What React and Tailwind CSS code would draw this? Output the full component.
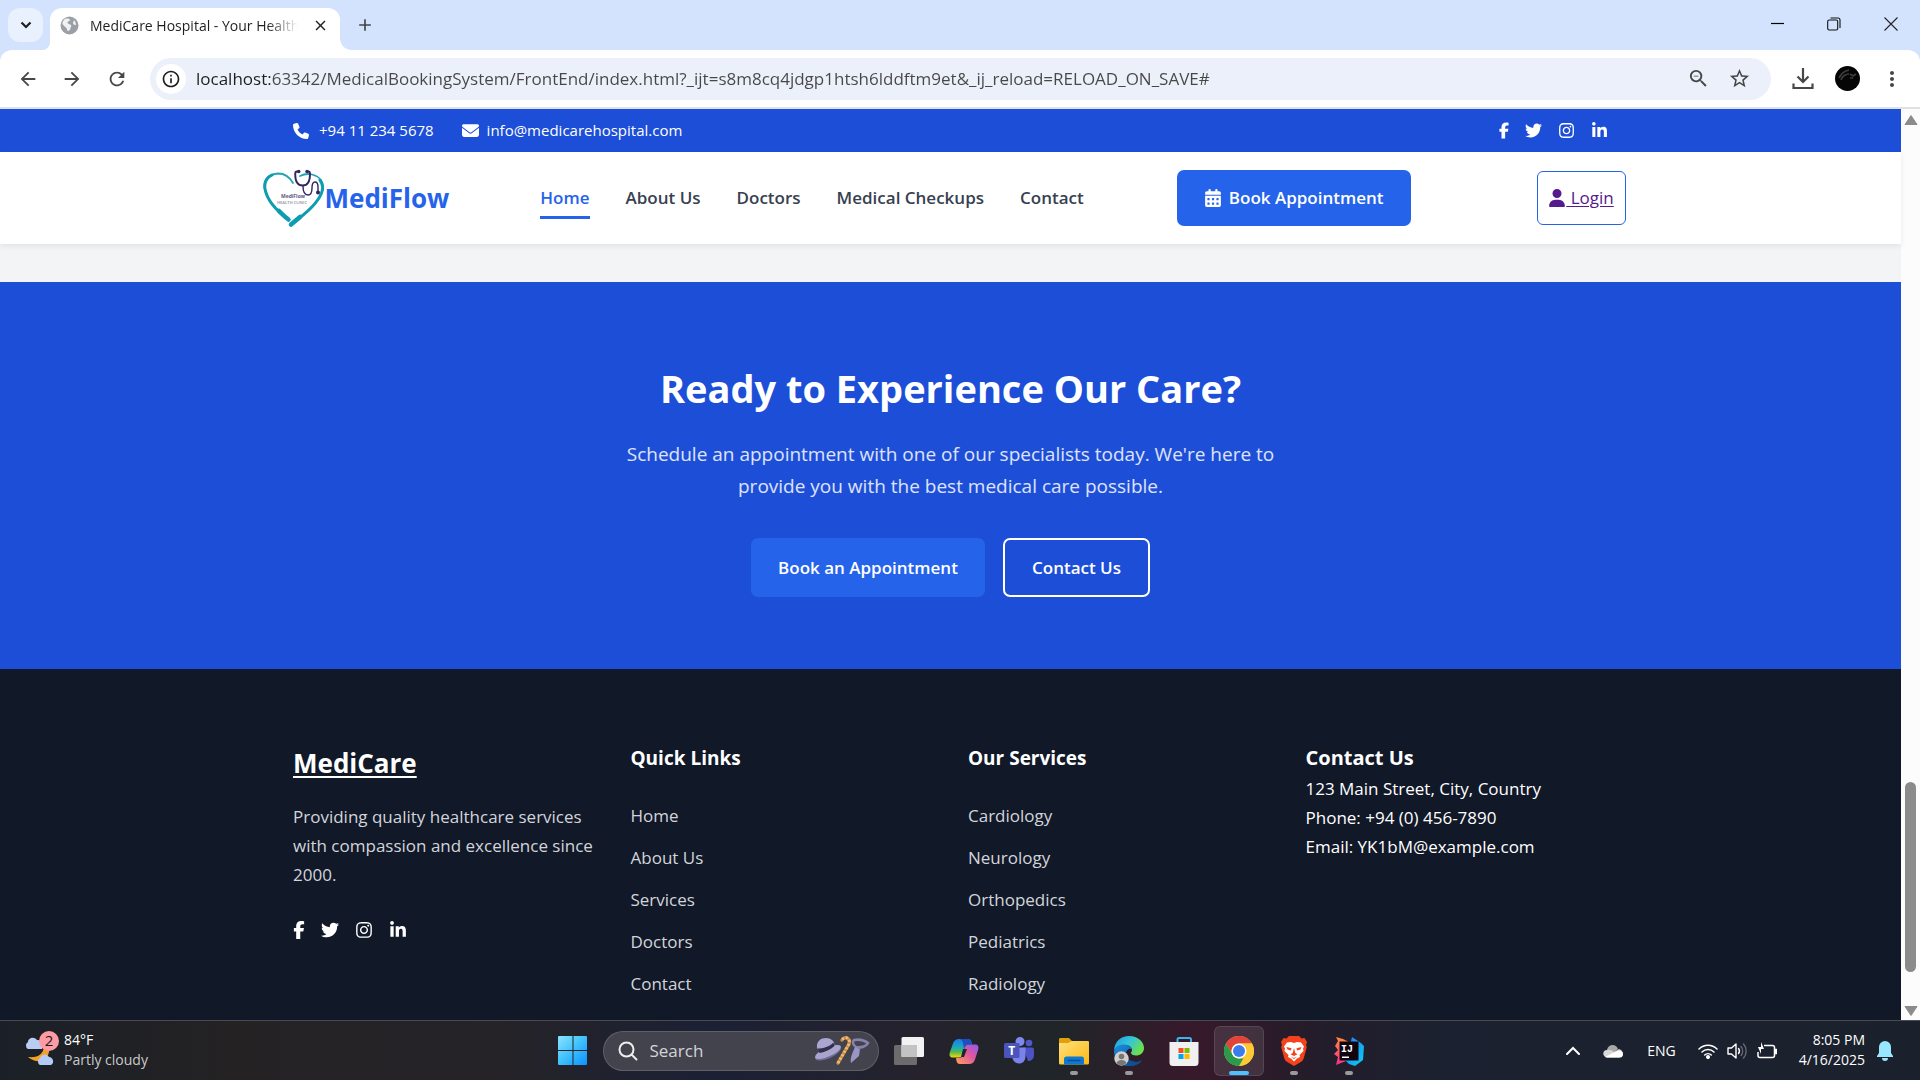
import React from "react";
import {
  FaPhone,
  FaEnvelope,
  FaFacebookF,
  FaTwitter,
  FaInstagram,
  FaLinkedinIn,
  FaCalendarDays,
  FaUser,
} from "react-icons/fa6";
import {
  MdArrowBack,
  MdArrowForward,
  MdRefresh,
  MdOutlineInfo,
  MdMoreVert,
  MdZoomOut,
  MdStarOutline,
  MdClose,
  MdAdd,
} from "react-icons/md";

const navLinks = ["Home", "About Us", "Doctors", "Medical Checkups", "Contact"];
const quickLinks = ["Home", "About Us", "Services", "Doctors", "Contact"];
const services = ["Cardiology", "Neurology", "Orthopedics", "Pediatrics", "Radiology"];

function TabStrip() {
  return (
    <div className="flex h-[50px] items-end bg-[#d3e3fd] pl-2">
      <button aria-label="Search tabs" className="mb-2 flex h-[34px] w-[35px] items-center justify-center rounded-xl bg-[#e9f1fe]">
        <svg width="12" height="8" viewBox="0 0 12 8" fill="none" stroke="#1f1f1f" strokeWidth="2.2"><path d="M1.5 1.5 6 6l4.500-4.500" /></svg>
      </button>
      <div className="flex items-end">
        <svg width="7" height="12" viewBox="0 0 7 12"><path d="M7 4v8H0c4 0 7-4 7-8Z" fill="#fff" /></svg>
        <div className="flex h-[42px] w-[290px] items-center rounded-t-xl bg-white px-2.5 pb-2">
          <svg width="19" height="19" viewBox="0 0 19 19"><circle cx="9.500" cy="9.500" r="9" fill="#9aa0a6" /><path d="M6 2.500c2 0 4 0 4 1.500S7.500 5 7.500 6.500 10 8 11 9s-.5 1.500-.5 3-1.500 3-2.500 3-.8-2-1.500-3S3 9.500 2.500 8 4 3 6 2.500Zm8 1.500c1 1 2 3 2 5-1.500 0-3-.5-3-2s1-1.500 1-3Z" fill="#fff" opacity=".85" /></svg>
          <span className="ml-[11px] w-[208px] overflow-hidden whitespace-nowrap text-[14px] text-[#1f1f1f] [mask-image:linear-gradient(to_right,black_85%,transparent)]">
            MediCare Hospital - Your Health
          </span>
          <button aria-label="Close tab" className="ml-auto flex size-5 items-center justify-center text-[17px] text-[#1f1f1f]"><MdClose /></button>
        </div>
        <svg width="12" height="12" viewBox="0 0 12 12"><path d="M0 0v12h12C5 12 0 7 0 0Z" fill="#fff" /></svg>
      </div>
      <button aria-label="New tab" className="mb-3 flex size-[26px] items-center justify-center text-[20px] text-[#444746]"><MdAdd /></button>
      <div className="mb-3 ml-auto flex items-center text-[#1f1f1f]">
        <button aria-label="Minimize" className="flex h-7 w-14 items-center justify-center">
          <svg width="14" height="14" viewBox="0 0 14 14"><path d="M0 6.500h13" stroke="#000" strokeWidth="1.200" /></svg>
        </button>
        <button aria-label="Restore" className="flex h-7 w-14 items-center justify-center">
          <svg width="14" height="14" viewBox="0 0 14 14" fill="none" stroke="#111" strokeWidth="1.100"><rect x=".7" y="3" width="10" height="10" rx="1.500" /><path d="M3.500 1h7.500a2 2 0 0 1 2 2v8" /></svg>
        </button>
        <button aria-label="Close window" className="flex h-7 w-[58px] items-center justify-center">
          <svg width="14" height="14" viewBox="0 0 14 14"><path d="m.5.5 13 13m0-13-13 13" stroke="#222" strokeWidth="1.100" /></svg>
        </button>
      </div>
    </div>
  );
}

function Toolbar() {
  return (
    <div className="bg-[#d3e3fd]">
      <div className="flex h-[59px] items-center rounded-t-xl border-b-2 border-[#dfe1e5] bg-white px-4 text-[#474747]">
        <button aria-label="Back" className="flex w-6 justify-center text-[22px]"><MdArrowBack /></button>
        <button aria-label="Forward" className="ml-5 flex w-6 justify-center text-[22px]"><MdArrowForward /></button>
        <button aria-label="Reload" className="ml-[21px] flex w-6 justify-center text-[22px]"><MdRefresh /></button>
        <div className="ml-[21px] flex h-[42px] flex-1 items-center rounded-full bg-[#ebf0fa] pl-1.5 pr-5">
          <button aria-label="Site information" className="flex size-[30px] items-center justify-center rounded-full bg-white text-[20px] text-[#1f1f1f]"><MdOutlineInfo /></button>
          <input
            aria-label="Address"
            className="ml-[10px] block h-[30px] min-w-0 flex-1 bg-[linear-gradient(90deg,#1f1f1f_74px,#474747_74px)] bg-clip-text text-[17px] text-transparent outline-none"
            defaultValue="localhost:63342/MedicalBookingSystem/FrontEnd/index.html?_ijt=s8m8cq4jdgp1htsh6lddftm9et&_ij_reload=RELOAD_ON_SAVE#"
          />
          <button aria-label="Zoom" className="flex text-[23px]"><MdZoomOut /></button>
          <button aria-label="Bookmark" className="ml-[18px] flex text-[23px]"><MdStarOutline /></button>
        </div>
        <button aria-label="Downloads" className="ml-5 flex w-6 justify-center">
          <svg width="22" height="22" viewBox="0 0 22 22" fill="none" stroke="#474747" strokeWidth="2.200"><path d="M11 0v14M5.500 8.500 11 14l5.500-5.500M1.500 15.500V20h19v-4.500" /></svg>
        </button>
        <button aria-label="Profile" className="ml-5 flex size-[25px]">
          <svg width="25" height="25" viewBox="0 0 25 25"><circle cx="12.500" cy="12.500" r="12.500" fill="#050505" /><path d="M4 12c2-4 5-7 10-8m-8 10c1-4 5-6 8-6m1 0 3 2 3-2m-6 4 3 0" stroke="#3d3d3d" strokeWidth="1.600" fill="none" /></svg>
        </button>
        <button aria-label="Menu" className="ml-5 flex w-6 justify-center text-[24px]"><MdMoreVert /></button>
      </div>
    </div>
  );
}

const socials = [
  ["Facebook", FaFacebookF],
  ["Twitter", FaTwitter],
  ["Instagram", FaInstagram],
  ["LinkedIn", FaLinkedinIn],
];

function TopBar() {
  return (
    <div className="bg-[#1d4ed8] text-white">
      <div className="mx-auto flex h-[43px] max-w-[1315px] items-center text-[15px]">
        <FaPhone className="text-[16px]" />
        <span className="ml-2.5">+94 11 234 5678</span>
        <FaEnvelope className="ml-7 text-[17px]" />
        <span className="ml-2">info@medicarehospital.com</span>
        <div className="ml-auto flex items-center gap-4 text-[17px]">
          {socials.map(([name, Icon]) => (
            <a key={name} href="#" aria-label={name}><Icon className={name === "Facebook" ? "w-2.5" : ""} /></a>
          ))}
        </div>
      </div>
    </div>
  );
}

function HeartLogo() {
  return (
    <svg width="63" height="62" viewBox="0 0 63 62" fill="none" strokeLinecap="round">
      <path d="M31 16C27 9 22 6.500 16 6.500 6 7 1.500 13 2.500 21" stroke="#1fa3b5" strokeWidth="1.800" />
      <path d="M10 8C4 11 2 16 3 22c2 11 12 22 23 30" stroke="#0d9cb0" strokeWidth="3" />
      <path d="M17 44c3 3 6 6 9.500 8.500" stroke="#0d9cb0" strokeWidth="4.500" />
      <path d="M38 9c4-2 8-2.500 12-1.500 8 2 12 8 10.500 16" stroke="#1fa3b5" strokeWidth="1.800" />
      <path d="M58 13c3 4 3.500 8 1.500 13-4 11-16 21-30 31" stroke="#0d9cb0" strokeWidth="3" />
      <path d="m29 57.500 9-7.500" stroke="#0d9cb0" strokeWidth="4.500" />
      <path d="M36.500 4.500h-1.500c-1.200 0-1.800 1-1.800 2.500 0 7 2.500 11.500 7.500 11.500S48 14 48 7c0-1.500-.6-2.500-1.800-2.500H45" stroke="#32245f" strokeWidth="1.900" />
      <circle cx="36.800" cy="4.500" r="1.700" fill="#32245f" />
      <circle cx="45" cy="4.500" r="1.700" fill="#32245f" />
      <path d="M41 19c0 6 2 9 5 9s4-3 4-7 1-6 3-6 3 2 3 5v5" stroke="#32245f" strokeWidth="1.400" />
      <circle cx="56" cy="25.500" r="2" fill="#32245f" />
      <text x="19" y="31" fontSize="5" fill="#5d5880" fontFamily="Open Sans, sans-serif">MediFlow</text>
      <text x="15" y="37" fontSize="4" fill="#a3a3ad" fontFamily="Open Sans, sans-serif">HEALTH CLINIC</text>
    </svg>
  );
}

function Header() {
  return (
    <header className="relative z-10 bg-white shadow-[0_2px_6px_rgba(0,0,0,0.08)]">
      <div className="mx-auto flex h-[92px] max-w-[1378px] items-center">
        <a href="#" className="flex items-center text-[26px] font-bold text-[#2563eb]">
          <HeartLogo />
          <span className="whitespace-nowrap">MediFlow</span>
        </a>
        <nav className="ml-[91px] flex gap-9 text-[17px] font-semibold text-[#374151]">
          {navLinks.map((label, i) => (
            <a
              key={label}
              href="#"
              className={i === 0 ? "whitespace-nowrap border-b-3 border-[#2563eb] pb-1.5 pt-2 text-[#2563eb]" : "whitespace-nowrap border-b-3 border-transparent pb-1.5 pt-2"}
            >
              {label}
            </a>
          ))}
        </nav>
        <button className="ml-[93px] flex h-14 w-[234px] items-center justify-center gap-[7px] rounded-[7px] bg-[#2563eb] text-[17px] font-semibold text-white">
          <FaCalendarDays className="text-[18px]" />
          Book Appointment
        </button>
        <a href="#" className="ml-auto mr-[14px] flex h-[54px] w-[89px] items-center justify-center rounded-md border border-[#2563eb] text-[17px] text-[#551a8b]">
          <FaUser className="text-[18px]" />
          <span className="whitespace-pre underline underline-offset-2"> Login</span>
        </a>
      </div>
    </header>
  );
}

function CallToAction() {
  return (
    <section className="flex h-[387px] flex-col items-center bg-[#1d4ed8] pt-[79px] text-center text-white">
      <h2 className="text-[38px] font-bold leading-[54px]">Ready to Experience Our Care?</h2>
      <p className="mt-[23px] max-w-[680px] text-[19px] leading-8 text-white/85">
        Schedule an appointment with one of our specialists today. We're here to provide you with the best medical care possible.
      </p>
      <div className="mt-9 flex gap-[18px] text-[17px] font-semibold">
        <button className="h-[59px] w-[234px] rounded-[7px] bg-[#2563eb]">Book an Appointment</button>
        <button className="h-[59px] w-[147px] rounded-[7px] border-2 border-white">Contact Us</button>
      </div>
    </section>
  );
}

function LinkColumn({ title, links }) {
  return (
    <div>
      <h3 className="text-[19px] font-bold leading-8">{title}</h3>
      <ul className="mt-7 flex flex-col gap-[14px] leading-7 text-[#d1d5db]">
        {links.map((link) => (
          <li key={link}><a href="#">{link}</a></li>
        ))}
      </ul>
    </div>
  );
}

function Footer() {
  return (
    <footer className="min-h-0 flex-1 overflow-hidden bg-[#111827] pt-[73px] text-white">
      <div className="mx-auto grid max-w-[1315px] grid-cols-4 gap-[35px] text-[17px] leading-[29px]">
        <div>
          <a href="#" className="block text-[26px] font-bold leading-[42px] underline decoration-2 underline-offset-3">MediCare</a>
          <p className="mt-[18px] text-[#d1d5db]">Providing quality healthcare services with compassion and excellence since 2000.</p>
          <div className="mt-8 flex items-center gap-4 text-[18px]">
            {socials.map(([name, Icon]) => (
              <a key={name} href="#" aria-label={name}><Icon className={name === "Facebook" ? "w-3" : ""} /></a>
            ))}
          </div>
        </div>
        <LinkColumn title="Quick Links" links={quickLinks} />
        <LinkColumn title="Our Services" links={services} />
        <div>
          <h3 className="text-[20px] font-bold leading-8">Contact Us</h3>
          <p>123 Main Street, City, Country</p>
          <p>Phone: +94 (0) 456-7890</p>
          <p>Email: YK1bM@example.com</p>
        </div>
      </div>
    </footer>
  );
}

function Scrollbar() {
  return (
    <div className="flex w-[19px] flex-col items-center bg-[#fcfcfc]">
      <svg className="mt-1.5" width="14" height="10" viewBox="0 0 14 10"><path d="M7 .5 13 9.500H1Z" fill="#8b8b8b" stroke="#8b8b8b" strokeLinejoin="round" /></svg>
      <div className="flex-[656]" />
      <div className="w-[11px] flex-[190] rounded-full bg-[#8b8b8b]" />
      <div className="flex-[34]" />
      <svg className="mb-1" width="14" height="10" viewBox="0 0 14 10"><path d="M1 .5h12L7 9.500Z" fill="#8b8b8b" stroke="#8b8b8b" strokeLinejoin="round" /></svg>
    </div>
  );
}

function WindowsIcon() {
  return (
    <svg width="30" height="30" viewBox="0 0 30 30">
      <defs><linearGradient id="win" x1="0" y1="0" x2="1" y2="1"><stop offset="0" stopColor="#8ae4ff" /><stop offset=".5" stopColor="#3fc0fb" /><stop offset="1" stopColor="#0a93ff" /></linearGradient></defs>
      <path d="M1 0h13.500v14H0V1a1 1 0 0 1 1-1Zm14.500 0H28a1 1 0 0 1 1 1v13H15.500ZM0 15h14.500v14H1a1 1 0 0 1-1-1Zm15.500 0H29v13a1 1 0 0 1-1 1H15.500Z" fill="url(#win)" />
    </svg>
  );
}

function SearchDoodle() {
  return (
    <svg width="56" height="32" viewBox="0 0 56 32" fill="none">
      <ellipse cx="14" cy="18" rx="14" ry="5.500" transform="rotate(-24 14 18)" fill="#6f6b98" />
      <ellipse cx="14" cy="17" rx="14" ry="4.500" transform="rotate(-24 14 17)" fill="#a7a4cd" />
      <path d="M3 13C2 6 7 3 12 3c5 0 8 3 8.500 6.500-4 4-10 6.500-15 7.500Z" fill="#a9a7d0" />
      <path d="M3.500 13.500c6 0 12-2 16-6l1 3.500C16 15 10 17.500 5.500 18Z" fill="#32304e" />
      <path d="M24 28 35 9c2-5-4-9-7-4" stroke="#c98d45" strokeWidth="3.400" strokeLinecap="round" />
      <path d="M24 28 35 9c2-5-4-9-7-4" stroke="#f0bd7b" strokeWidth="2.800" strokeDasharray="2 2" />
      <path d="M40 5c5-1 10 0 14 3-2 4-8 5-12 4-3-2-4-5-2-7Z" stroke="#8582ad" strokeWidth="2.600" />
      <path d="m41 12 5 2-1 7-8 7c-1-5 1-9 4-16Z" fill="#9996c4" />
    </svg>
  );
}

function TaskViewIcon() {
  return (
    <svg width="30" height="28" viewBox="0 0 30 28">
      <rect x="0" y="8" width="23" height="20" rx="1.500" fill="#6d6b6b" />
      <rect x="7.500" y="0" width="22.500" height="20" rx="1.500" fill="#f2f2f2" />
      <path d="M7.500 8H23v12H7.500Z" fill="#c4c3c4" />
    </svg>
  );
}

function CopilotIcon() {
  return (
    <svg width="30" height="28" viewBox="0 0 30 28">
      <defs>
        <linearGradient id="cpa" x1="0" y1="0" x2="0" y2="1"><stop offset="0" stopColor="#1f7be8" /><stop offset=".45" stopColor="#1ba9bd" /><stop offset=".7" stopColor="#55b84e" /><stop offset="1" stopColor="#f5d90a" /></linearGradient>
        <linearGradient id="cpb" x1="1" y1="0" x2="0" y2="1"><stop offset="0" stopColor="#8a5cf0" /><stop offset=".45" stopColor="#e0569e" /><stop offset="1" stopColor="#ffa357" /></linearGradient>
      </defs>
      <path d="M10 2h9c2 0 3 1 3.500 3l.7 2.500h-4c-2 0-3 1-3.500 3l-2 7c-.7 2-2 3-4 3H4c-3 0-4-2-3.200-5L4 6.500C5 3.500 7 2 10 2Z" fill="url(#cpa)" />
      <path d="M20 27h-9c-2 0-3-1-3.500-3L7 21h3c2 0 3-1 3.500-3l2.300-7.500c.7-2 2-3 4-3H26c3 0 4 2 3.200 5L26 22.500C25 25.500 23 27 20 27Z" fill="url(#cpb)" />
      <path d="m14 12-2 8h3l3-8Z" fill="#202432" />
      <path d="M19 2c2 0 3 1 3.500 3l.7 2.500h-4c-2 0-3.200 1-3.700 3l-.5 1.500L14 6c-.5-2-1.500-3.500-3.500-4Z" fill="#1b50c5" />
    </svg>
  );
}

function TeamsIcon() {
  return (
    <svg width="30" height="28" viewBox="0 0 30 28">
      <circle cx="25" cy="6" r="3.300" fill="#5059c9" /><path d="M19 10.500h9a2 2 0 0 1 2 2V18c0 4-3 6-6 6Z" fill="#4a52c4" />
      <circle cx="16" cy="4.500" r="4.500" fill="#7f89ec" /><path d="M8 10.500h13.500V19c0 5-3 7.500-6.500 7.500S9 24 8 20Z" fill="#7b83eb" />
      <rect x="0" y="6" width="15.500" height="15" rx="1.500" fill="#4b53bc" />
      <text x="7.700" y="18" textAnchor="middle" fontSize="12" fontWeight="700" fill="#fff" fontFamily="Open Sans, sans-serif">T</text>
    </svg>
  );
}

function ExplorerIcon() {
  return (
    <svg width="30" height="28" viewBox="0 0 30 28">
      <defs><linearGradient id="fold" x1="0" y1="0" x2="1" y2="1"><stop offset="0" stopColor="#ffe07a" /><stop offset="1" stopColor="#fbb917" /></linearGradient></defs>
      <path d="M0 2.500C0 1.500.7 1 1.500 1h8.500l3 3h15a2 2 0 0 1 2 2v6H0Z" fill="#e2a10a" />
      <path d="M0 6h9l4-2h15.500c1 0 1.500.7 1.500 1.500V26a1.500 1.500 0 0 1-1.500 1.500h-27A1.500 1.500 0 0 1 0 26Z" fill="url(#fold)" />
      <path d="M5 27.500V22a2.500 2.500 0 0 1 2.500-2.500h15A2.500 2.500 0 0 1 25 22v5.500Z" fill="#0f78d0" />
      <path d="M9 23.500h12" stroke="#0a4f96" strokeWidth="1.300" strokeLinecap="round" />
    </svg>
  );
}

function EdgeIcon() {
  return (
    <svg width="30" height="30" viewBox="0 0 30 30">
      <defs>
        <linearGradient id="edg" x1="0" y1="0" x2="1" y2=".5"><stop offset="0" stopColor="#1b9de2" /><stop offset=".55" stopColor="#35c6d8" /><stop offset="1" stopColor="#6be04c" /></linearGradient>
        <linearGradient id="edb" x1="0" y1="0" x2="1" y2="1"><stop offset="0" stopColor="#1a8fdc" /><stop offset="1" stopColor="#0c4f9e" /></linearGradient>
      </defs>
      <path d="M0 14C1 5 7 0 15 0c9 0 15 6 15 12 0 5-4 7.500-8 7.500-3 0-5-1-5-2.500 0-1 1-1.500 1-3 0-3-3-5-7-5-5 0-9 2-11 5Z" fill="url(#edg)" />
      <path d="M0 15c1-4 5-6.500 10-6.500 4 0 8 2.500 8 5.500 0-2-6-2-6 4 0 5 5 8 10 8 2 0 4-.5 5.500-1.300C25 28 20 30 15 30 6 30 0 23 0 15Z" fill="url(#edb)" />
      <path d="M12 18c0 5 5 8 10 8 2 0 4-.5 6-2-2 4-7 6-13 6-5-2-7-9-3-12Z" fill="#0f4f94" />
      <circle cx="7.500" cy="22.500" r="7.200" fill="#d2d0ce" /><circle cx="7.500" cy="20.500" r="2.800" fill="#777" /><path d="M2.500 27c1-4 9-4 10 0-3 3.300-7 3.300-10 0Z" fill="#777" />
    </svg>
  );
}

function StoreIcon() {
  return (
    <svg width="30" height="30" viewBox="0 0 30 30">
      <path d="M8.500 7V3.500A1.500 1.500 0 0 1 10 2h10.500A1.500 1.500 0 0 1 22 3.500V7" fill="none" stroke="#35b6f0" strokeWidth="2" />
      <path d="M.5 6h29v20.500a3.500 3.500 0 0 1-3.500 3.500H4a3.500 3.500 0 0 1-3.500-3.500Z" fill="#f0f0f0" />
      <path d="M9.500 12h5v5h-5Z" fill="#f25022" /><path d="M15.500 12h5v5h-5Z" fill="#7fba00" />
      <path d="M9.500 18h5v5h-5Z" fill="#00a4ef" /><path d="M15.500 18h5v5h-5Z" fill="#ffb900" />
    </svg>
  );
}

function ChromeIcon() {
  return (
    <svg width="30" height="30" viewBox="0 0 30 30">
      <circle cx="15" cy="15" r="15" fill="#fcc934" />
      <path d="M2 7.500A15 15 0 0 1 28 7.500H15a7.500 7.500 0 0 0-6.500 11.250Z" fill="#e0443a" />
      <path d="M2 7.500 8.500 18.750A7.500 7.500 0 0 0 15 22.500h6.500L15 30A15 15 0 0 1 2 7.500Z" fill="#2a9a4b" />
      <path d="M28 7.500A15 15 0 0 1 15 30l6.500-11.250A7.500 7.500 0 0 0 15 7.500Z" fill="#fcc934" />
      <circle cx="15" cy="15" r="7.500" fill="#fff" /><circle cx="15" cy="15" r="6" fill="#3b7ded" />
    </svg>
  );
}

function BraveIcon() {
  return (
    <svg width="26" height="30" viewBox="0 0 26 30">
      <path d="M8 0h10l2.500 2.500 3-.5L26 6l-1 3 .8 2-3 11c-.4 1.500-1.300 3-2.600 3.800L13 30l-7.200-4.200C4.500 25 3.600 23.500 3.200 22l-3-11L1 9 0 6l2.500-4 3 .5Z" fill="#f4431c" />
      <path d="M6 6.500 10 6l3 1 3-1 4 .5 3 4-1 2 .5 2.500-4 4 .5 2-3 1.500-3 3-3-3L7 21l.5-2-4-4 .5-2.500-1-2Z" fill="#fff" />
      <path d="m5.500 11 5 1.300-.5 2.200-3.500-1Zm15 0-5 1.300.5 2.200 3.500-1ZM13 12l1.300 5 2.200 1.200L13 20l-3.500-1.800 2.200-1.200ZM9.500 20.500 13 22l3.500-1.500L13 23Z" fill="#f4431c" />
    </svg>
  );
}

function IntelliJIcon() {
  return (
    <svg width="30" height="30" viewBox="0 0 30 30">
      <defs>
        <linearGradient id="ija" x1="0" y1="0" x2="0" y2="1"><stop offset="0" stopColor="#ff8a3c" /><stop offset="1" stopColor="#fb2f8c" /></linearGradient>
        <linearGradient id="ijb" x1="0" y1="0" x2="1" y2="1"><stop offset="0" stopColor="#2673f5" /><stop offset="1" stopColor="#0bd0f2" /></linearGradient>
      </defs>
      <path d="m2 1 7 2 8 4v16L2 29l2-8-4-3 4-4-3-4 3-5Z" fill="url(#ija)" />
      <path d="m18 1 9 6 3 3-1 14-8 6-6-2-5-5 7-18Z" fill="url(#ijb)" />
      <rect x="5.500" y="5.500" width="19" height="19" fill="#100610" />
      <text x="7" y="15.500" fontSize="10" fontWeight="700" fill="#fff" fontFamily="Liberation Mono, monospace">IJ</text>
      <path d="M8 20.500h7v1.500H8Z" fill="#fff" />
    </svg>
  );
}

function TaskButton({ label, children, active, open }) {
  return (
    <button
      aria-label={label}
      className={active ? "relative flex size-[50px] items-center justify-center rounded-md border border-white/10 bg-white/10" : "relative flex size-[50px] items-center justify-center"}
    >
      {children}
      {open && <span className="absolute bottom-[1px] h-1 w-2 rounded-full bg-[#9a9a9a]" />}
      {active && <span className="absolute bottom-0 h-1 w-5 rounded-full bg-[#4cc2ff]" />}
    </button>
  );
}

function Taskbar() {
  return (
    <div className="flex h-[60px] items-center border-t border-[#474a50] bg-[linear-gradient(90deg,#1b2028_0%,#242223_12%,#252328_26%,#1b2034_37%,#25222d_48%,#1f2528_55%,#37192b_62%,#251c2a_68%,#1b2130_75%,#1b212c_100%)] text-[14px] leading-5 text-white">
      <div className="flex flex-1 items-center pl-6">
        <svg width="36" height="40" viewBox="0 0 36 40">
          <path d="M25 16c2 10-8 20-21 10 11 1 14-3 16-9Z" fill="#f4a023" />
          <path d="M4 18a4 4 0 0 1 0-7c0-4 6-6 9-2 3 0 5 2 5 5v4Z" fill="#b9cdf3" />
          <path d="M16 34a4 4 0 0 1 0-7c1-4 7-5 9-1 4 0 6 6 2 8Z" fill="#b4cbf6" />
          <circle cx="25" cy="10" r="10" fill="#ff9ba4" />
          <text x="25" y="15" textAnchor="middle" fontSize="15" fill="#1a1a1a" fontFamily="Open Sans, sans-serif">2</text>
        </svg>
        <div className="ml-1 pb-0.5">
          <div>84°F</div>
          <div className="text-[#c9c9c9]">Partly cloudy</div>
        </div>
      </div>
      <div className="ml-1 flex items-center gap-[5px]">
        <TaskButton label="Start"><WindowsIcon /></TaskButton>
        <div className="flex h-10 w-[276px] items-center rounded-full border border-white/15 bg-[#43434e] pl-[14px] pr-2">
          <svg width="20" height="20" viewBox="0 0 20 20" fill="none" stroke="#eee" strokeWidth="2"><circle cx="8.500" cy="8.500" r="7" /><path d="m13.500 13.500 5 5" strokeLinecap="round" /></svg>
          <input aria-label="Search" placeholder="Search" className="ml-3 w-0 min-w-0 flex-1 bg-transparent text-[17px] placeholder:text-[#d4d4d8] outline-none" />
          <SearchDoodle />
        </div>
        <TaskButton label="Task view"><TaskViewIcon /></TaskButton>
        <TaskButton label="Copilot"><CopilotIcon /></TaskButton>
        <TaskButton label="Teams"><TeamsIcon /></TaskButton>
        <TaskButton label="File Explorer" open><ExplorerIcon /></TaskButton>
        <TaskButton label="Edge" open><EdgeIcon /></TaskButton>
        <TaskButton label="Store"><StoreIcon /></TaskButton>
        <TaskButton label="Chrome" active><ChromeIcon /></TaskButton>
        <TaskButton label="Brave" open><BraveIcon /></TaskButton>
        <TaskButton label="IntelliJ IDEA" open><IntelliJIcon /></TaskButton>
      </div>
      <div className="flex flex-1 items-center justify-end pr-[27px]">
        <svg width="14" height="9" viewBox="0 0 14 9" fill="none" stroke="#fff" strokeWidth="2"><path d="m1 8 6-6 6 6" strokeLinecap="round" /></svg>
        <svg className="ml-[23px]" width="20" height="14" viewBox="0 0 20 14"><path d="M4 6C5 0 13-1 15 5l-6 5-7-2Z" fill="#a8a8a8" /><path d="M4 13.500C-1 13-1 6 4 6c3-1 5 1 7 2l5-3c5 1 5 8 0 8.500Z" fill="#d8d8d8" /><path d="m2 13 12-6c4-1 6 1 6 3s-1 3.500-3 3.500H4Z" fill="#fff" /></svg>
        <span className="ml-6">ENG</span>
        <svg className="ml-[22px]" width="20" height="16" viewBox="0 0 20 16" fill="none" stroke="#fff" strokeWidth="1.500" strokeLinecap="round"><path d="M1 6a12.500 12.500 0 0 1 18 0M4 9a8.500 8.500 0 0 1 12 0M6.700 12a4.700 4.700 0 0 1 6.600 0" /><circle cx="10" cy="14" r="1.300" fill="#fff" /></svg>
        <svg className="ml-[9px]" width="21" height="18" viewBox="0 0 21 18" fill="none" stroke="#fff" strokeWidth="1.400" strokeLinejoin="round" strokeLinecap="round"><path d="M1 6h3.500L9 2v14l-4.500-4H1Z" /><path d="M11.500 6.500a4 4 0 0 1 0 5" /><path d="M14 4.500a7 7 0 0 1 0 9M16.500 2a10.500 10.500 0 0 1 0 14" stroke="#666b75" /></svg>
        <svg className="ml-[9px]" width="20" height="17" viewBox="0 0 20 17" fill="none" stroke="#fff" strokeWidth="1.500"><path d="M7 3.500h8.500a2 2 0 0 1 2 2v8a2 2 0 0 1-2 2H3a2 2 0 0 1-2-2V10" /><path d="M18 7.500h1.500v4H18Z" fill="#fff" /><path d="M4 0v5H1l3 7V7h3Z" fill="#fff" stroke="none" /></svg>
        <div className="ml-[22px] pb-0.5 text-right">
          <div>8:05 PM</div>
          <div>4/16/2025</div>
        </div>
        <svg className="ml-3" width="16" height="20" viewBox="0 0 16 20"><path d="M8 0a6 6 0 0 1 6 6v6l2 3v1H0v-1l2-3V6a6 6 0 0 1 6-6Zm-3 17h6a3 3 0 0 1-6 0Z" fill="#99e6ff" /></svg>
      </div>
    </div>
  );
}

export default function App() {
  return (
    <div className="flex h-screen flex-col overflow-hidden bg-white font-['Open_Sans','Noto_Sans',sans-serif]">
      <TabStrip />
      <Toolbar />
      <div className="flex min-h-0 flex-1">
        <main className="flex min-w-0 flex-1 flex-col">
          <TopBar />
          <Header />
          <div className="h-[38px] bg-[#f3f4f6]" />
          <CallToAction />
          <Footer />
        </main>
        <Scrollbar />
      </div>
      <Taskbar />
    </div>
  );
}
